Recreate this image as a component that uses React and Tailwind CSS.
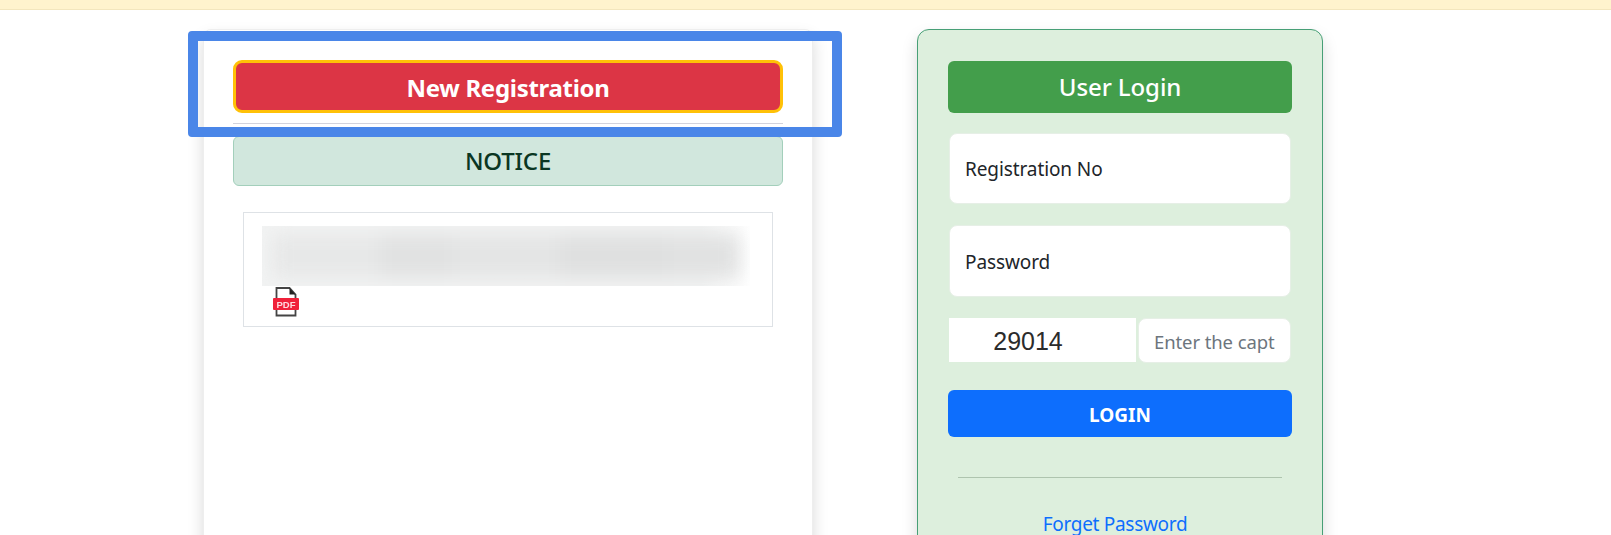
import React from 'react';

const sans = 'font-["Noto_Sans",sans-serif]';

const PdfIcon = () => (
  <svg width="28" height="30" viewBox="0 0 28 30" className="blur-[0.5px]">
    <path d="M4.5 1h13l6 6.5V28.5h-19z" fill="#fff" stroke="#444" strokeWidth="1.8" />
    <path d="M17.5 1l6 6.5h-6z" fill="#222" />
    <rect x="1" y="11" width="26" height="12" rx="1" fill="#f0213a" />
    <text x="14" y="20.5" textAnchor="middle" fontSize="9.5" fontWeight="700" fill="#ffd9de" fontFamily="Liberation Sans, sans-serif">PDF</text>
  </svg>
);

const LeftCard = () => (
  <div className="w-[610px] h-[520px] shrink-0 bg-white rounded-lg border border-[#eeeeee] px-[29px] pt-[30px] shadow-[0_8px_16px_rgba(0,0,0,0.15)]">
    <button className="w-full h-[53px] pt-[2px] rounded-[9px] border-[3px] border-[#ffc107] bg-[#dc3545] text-white text-[24px] font-bold tracking-[-0.3px]">
      New Registration
    </button>
    <div className="mt-[10px] h-px bg-[#d3d3dc]" />
    <div className="mt-[12px] h-[50px] rounded-md border border-[#a3cfbb] bg-[#d1e7dd] text-[#0a3622] text-[24px] font-medium tracking-[-0.2px] flex items-center justify-center">
      NOTICE
    </div>
    <div className="mt-[26px] mx-[10px] h-[115px] border border-[#dee2e6] pl-[18px] pr-[22px] pt-[13px]">
      <div className="h-[60px] overflow-hidden bg-gradient-to-r from-[#f2f3f3] from-90% to-white px-[10px] py-[8px]">
        <div className="h-full flex blur-[9px]">
          <div className="flex-[3] bg-[#e7e8e8]" />
          <div className="flex-[2] bg-[#e1e2e2]" />
          <div className="flex-[3] bg-[#e4e5e5]" />
          <div className="flex-[3] bg-[#dfe0e0]" />
          <div className="flex-[2] bg-[#e1e2e2]" />
        </div>
      </div>
      <div className="pl-[10px] pt-[1px]">
        <PdfIcon />
      </div>
    </div>
  </div>
);

const LoginCard = () => (
  <div className="w-[406px] h-[520px] shrink-0 rounded-xl border border-[#479f76] bg-[#ddefdd] px-[30px] pt-[31px] shadow-[0_8px_16px_rgba(0,0,0,0.15)]">
    <div className="h-[52px] rounded-md bg-[#439e4b] text-white text-[24px] font-medium tracking-[-0.1px] flex items-center justify-center">
      User Login
    </div>
    <div className="mx-px mt-[20px] h-[71px] pt-[2px] rounded-lg bg-white border border-[#e6efe6] px-[15px] flex items-center text-[19px] tracking-[-0.1px] text-[#212529]">
      Registration No
    </div>
    <div className="mx-px mt-[21px] h-[72px] pt-[2px] rounded-lg bg-white border border-[#e6efe6] px-[15px] flex items-center text-[19px] tracking-[-0.1px] text-[#212529]">
      Password
    </div>
    <div className="mx-px mt-[21px] flex items-start gap-[2px]">
      <div className="w-[187px] h-[44px] bg-white flex items-center justify-center pr-[29px] pt-[4px] font-['Liberation_Sans',sans-serif] text-[25px] text-[#2b2b2b]">
        29014
      </div>
      <div className="flex-1 h-[45px] pt-[2px] rounded-lg bg-white border border-[#e6efe6] pl-[15px] flex items-center overflow-hidden whitespace-nowrap text-[18.5px] tracking-[-0.1px] text-[#6c757d]">
        Enter the capt
      </div>
    </div>
    <button className="mt-[27px] w-full h-[47px] pt-[3px] rounded-md bg-[#0d6efd] text-white text-[19px] font-bold">
      LOGIN
    </button>
    <div className="mx-[10px] mt-[40px] h-px bg-[#aec4ae]" />
    <div className="mt-[36px] text-center pr-[10px] text-[19px] leading-[20px] tracking-[-0.3px] text-[#0d6efd]">
      Forget Password
    </div>
  </div>
);

export default function App() {
  return (
    <div className={`relative h-[535px] overflow-hidden bg-white ${sans}`}>
      <div className="h-[10px] bg-[#fff3cd] border-b border-[#f3e6bd]" />
      <div className="flex gap-[104px] pl-[203px] pt-[19px]">
        <LeftCard />
        <LoginCard />
      </div>
      {/* annotation frame drawn over the page */}
      <div className="absolute left-[188px] top-[31px] w-[654px] h-[106px] rounded border-[10px] border-[#4a86e8]" />
    </div>
  );
}
